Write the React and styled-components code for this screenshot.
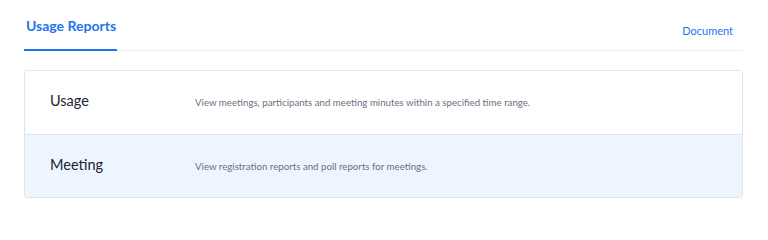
import React from 'react';
import styled, { createGlobalStyle } from 'styled-components';

const GlobalStyle = createGlobalStyle`
  body {
    margin: 0;
    background: #fff;
    font-family: Lato, 'Open Sans', Arial, sans-serif;
    -webkit-font-smoothing: antialiased;
  }
`;

const Page = styled.div`
  padding: 0 25px 0 24px;
`;

const Header = styled.div`
  display: flex;
  align-items: flex-end;
  justify-content: space-between;
  border-bottom: 1px solid #ededf2;
`;

const Tab = styled.div`
  margin: 16px 0 -1px;
  padding: 0 1px 13px 2px;
  line-height: 20px;
  font-size: 14px;
  font-weight: 700;
  color: #1d74f0;
  border-bottom: 2px solid #1d74f0;
`;

const DocLink = styled.a`
  padding: 0 10px 11px 0;
  line-height: 16px;
  font-size: 11px;
  color: #1d74f0;
  text-decoration: none;
  cursor: pointer;
`;

const Card = styled.div`
  margin-top: 19px;
  border: 1px solid #e3e3e8;
  border-radius: 3px;
  overflow: hidden;
`;

const Row = styled.div`
  display: flex;
  align-items: baseline;
  box-sizing: border-box;
  height: 63px;
  padding: 20px 25px 0;
  background: ${({ $active }) => ($active ? '#edf6ff' : '#fff')};
  border-top: ${({ $first }) => ($first ? 'none' : '1px solid #e3e3e8')};
`;

const Title = styled.div`
  width: 145px;
  flex: none;
  font-size: 14.5px;
  line-height: 20px;
  color: #232333;
`;

const Desc = styled.div`
  font-size: 9.7px;
  line-height: 20px;
  color: #6e6e80;
`;

const reports = [
  {
    name: 'Usage',
    desc: 'View meetings, participants and meeting minutes within a specified time range.',
  },
  {
    name: 'Meeting',
    desc: 'View registration reports and poll reports for meetings.',
    active: true,
  },
];

const App = () => (
  <>
    <GlobalStyle />
    <Page>
      <Header>
        <Tab>Usage Reports</Tab>
        <DocLink>Document</DocLink>
      </Header>
      <Card>
        {reports.map((r, i) => (
          <Row key={r.name} $first={i === 0} $active={r.active}>
            <Title>{r.name}</Title>
            <Desc>{r.desc}</Desc>
          </Row>
        ))}
      </Card>
    </Page>
  </>
);

export default App;
